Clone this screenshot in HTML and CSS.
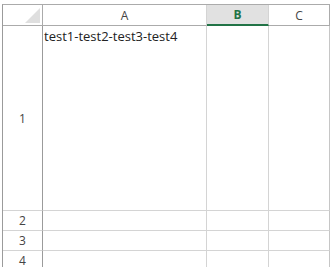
FILE: index.html
```html
<!DOCTYPE html>
<html>
<head>
<meta charset="utf-8">
<link rel="stylesheet" href="styles.css">
</head>
<body>
<div class="sheet">
  <div class="corner"><span class="tri"></span></div>
  <div class="colhead">A</div>
  <div class="colhead sel">B</div>
  <div class="colhead last">C</div>

  <div class="rowhead">1</div>
  <div class="cell val">test1-test2-test3-test4</div>
  <div class="cell"></div>
  <div class="cell last"></div>

  <div class="rowhead">2</div>
  <div class="cell"></div>
  <div class="cell"></div>
  <div class="cell last"></div>

  <div class="rowhead">3</div>
  <div class="cell"></div>
  <div class="cell"></div>
  <div class="cell last"></div>

  <div class="rowhead">4</div>
  <div class="cell"></div>
  <div class="cell"></div>
  <div class="cell last"></div>
</div>
</body>
</html>
```
FILE: styles.css
```css
html, body {
  margin: 0;
  padding: 0;
  background: #ffffff;
  overflow: hidden;
}
body {
  font-family: "Open Sans", "Noto Sans", sans-serif;
  font-size: 13px;
  color: #222;
}
.sheet {
  margin: 4px 0 0 2px;
  display: grid;
  grid-template-columns: 40px 164px 62px 61px;
  grid-template-rows: 21px 185px 20px 20px 20px;
  border-top: 1px solid #ababab;
  border-left: 1px solid #9b9b9b;
  width: max-content;
}
.corner {
  border-right: 1px solid #ababab;
  border-bottom: 1px solid #ababab;
  position: relative;
}
.tri {
  position: absolute;
  right: 2px;
  bottom: 2px;
  width: 0;
  height: 0;
  border-left: 15px solid transparent;
  border-bottom: 15px solid #dfdfdf;
}
.colhead {
  border-right: 1px solid #d4d4d4;
  border-bottom: 1px solid #ababab;
  display: flex;
  align-items: center;
  justify-content: center;
  color: #444;
  font-size: 12px;
}
.colhead.last {
  border-right: 1px solid #ababab;
}
.colhead.sel {
  background: #e1e1e1;
  color: #217346;
  font-weight: bold;
  border-bottom: 2px solid #217346;
}
.rowhead {
  border-right: 1px solid #9b9b9b;
  border-bottom: 1px solid #d4d4d4;
  display: flex;
  align-items: center;
  justify-content: center;
  color: #444;
  font-size: 12px;
}
.cell {
  border-right: 1px solid #d4d4d4;
  border-bottom: 1px solid #d4d4d4;
}
.cell.last {
  border-right: 1px solid #c6c6c6;
}
.val {
  padding: 2px 0 0 1px;
  white-space: nowrap;
  font-size: 13px;
  line-height: 17px;
  color: #222;
}
```
